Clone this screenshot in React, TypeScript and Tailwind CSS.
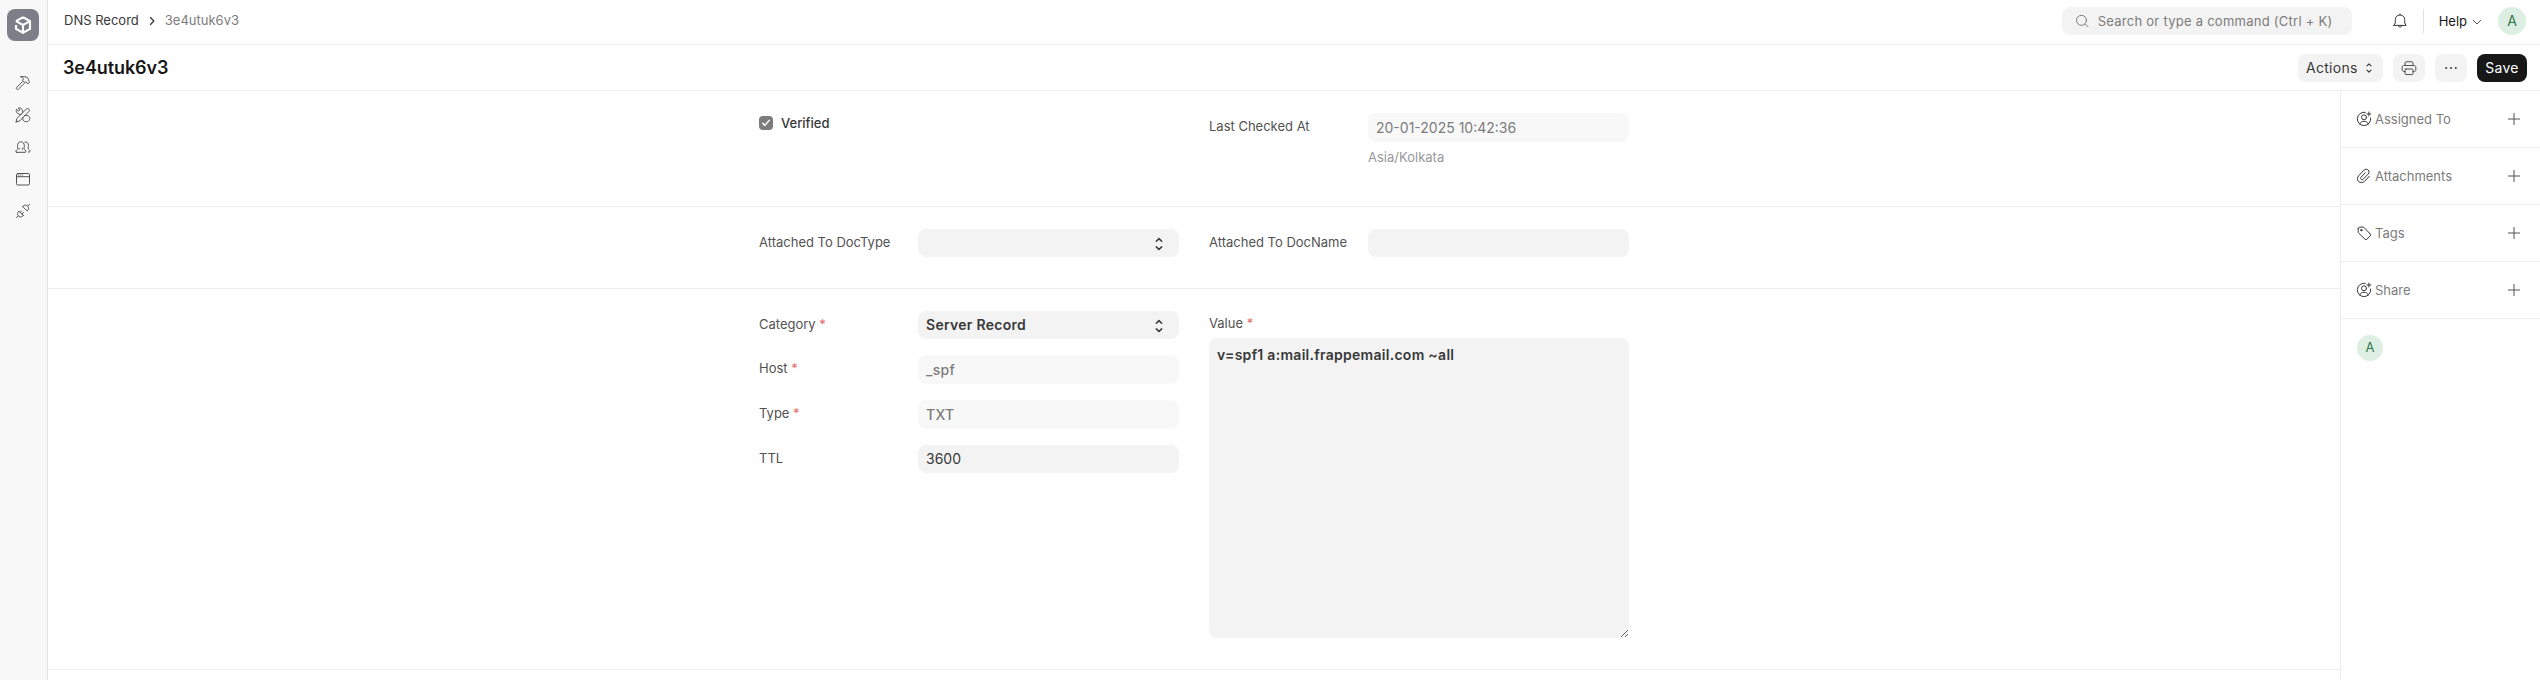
import type { ReactNode } from "react";

function Icon({ size = 16, className = "", children }: { size?: number; className?: string; children: ReactNode }) {
  return (
    <svg
      width={size}
      height={size}
      viewBox="0 0 16 16"
      fill="none"
      stroke="currentColor"
      strokeLinecap="round"
      strokeLinejoin="round"
      className={`shrink-0 ${className}`}
    >
      {children}
    </svg>
  );
}

const SelectIcon = ({ className = "" }: { className?: string }) => (
  <Icon className={className}>
    <path d="M5.300 5.200 8 2.600l2.700 2.600M5.300 10.900 8 13.500l2.700-2.600" strokeWidth="1.500" />
  </Icon>
);

const Plus = () => (
  <Icon className="text-[#525252]">
    <path d="M8 2.500v11M2.500 8h11" strokeLinecap="square" />
  </Icon>
);

const UserPlus = () => (
  <Icon>
    <path d="M9.300 1.300A6.700 6.700 0 1 0 14.700 7" />
    <circle cx="8" cy="6.300" r="2.500" />
    <path d="M3.600 13c.7-1.700 2.300-2.700 4.400-2.700s3.700 1 4.400 2.700M12.900 1v4M10.900 3h4" />
  </Icon>
);

const Clip = () => (
  <Icon>
    <path d="m13.400 8.200-4.900 5.100c-1.700 1.700-4.300 1.700-5.900.2-1.600-1.600-1.500-4.200.1-5.900l5.400-5.500c1.200-1.200 3-1.200 4.100-.1s1.100 2.900 0 4.100L7.200 11.200c-.7.700-1.600.7-2.200.1s-.6-1.500.1-2.200l4.200-4.300" />
  </Icon>
);

const Tag = () => (
  <Icon>
    <path d="M2.200 3.600v3.500c0 .4.200.8.500 1.100l6.400 6.100c.5.500 1.200.5 1.700 0l3.600-3.500c.5-.5.500-1.200 0-1.700L8.200 2.600c-.3-.3-.7-.5-1.100-.5H3.700c-.8 0-1.500.700-1.500 1.500Z" />
    <circle cx="5.300" cy="5.200" r=".7" fill="currentColor" />
  </Icon>
);

const navIcons: ReactNode[] = [
  <Icon key="build">
    <path d="M5.700 1.700h3.400c3 0 4.800 1.700 4.600 4.300l1 .9-1.800 1.900-2-1.800-1.400.3-2-2 .9-1.400c-.3-1-1.200-1.700-2.700-2.200ZM7.600 6.500l-6 6c-1 1.100.7 2.800 1.800 1.700l6-6" />
  </Icon>,
  <Icon key="tools">
    <path d="M1.200 14.800l.6-3.300 9.500-9.400c1.800-1.600 4.100.7 2.500 2.500l-9.300 9.500-3.300.7ZM6.200 7.200c-3.400.7-5.800-1.900-4.700-4.900l2 1.900 1.300-1.300-1.800-1.700c3-.8 5.400 1.500 4.500 4.300M9.600 8.600c3.500-.8 6.100 1 4.900 3.900-1 2.500-4.100 3-5.800 1.300-1.200-1.200-1-2.600-.8-3.600" />
  </Icon>,
  <Icon key="users">
    <path d="M1.500 13.300h8.600c.9 0 1-.8.700-1.400-.4-.8-1.200-1-1.600-1.600-.5-.9.100-1.900.1-3.600 0-2.200-1.300-3.900-3.500-3.900S2.500 4.500 2.500 6.700c0 1.700.5 2.700 0 3.600-.4.600-1.300.800-1.600 1.600-.2.600-.1 1.400.6 1.400ZM4.200 9.200v1M7.400 9.200v1M9.900 3c2.100-.5 3.500 1.300 3.500 3.400 0 1.700-.5 2.800 0 3.700.4.600 1.300.8 1.600 1.500.2.600 0 1.400-.7 1.400h-.9" />
  </Icon>,
  <Icon key="website">
    <rect x="1.500" y="2.500" width="13" height="11.500" rx="1.400" />
    <path d="M1.500 5.700h13M3.200 4h.3M5.200 4h.3M7.200 4h.3" />
  </Icon>,
  <Icon key="plug">
    <path d="M7.600 3.500c1.500-1.500 2.800-1.800 4.200-1 .8.500 1.400 1.300 1.700 2.200.2 1.200-.4 2.300-1.400 3.200L7.600 3.500ZM13 2.900l1.500-1.500M8.300 12.500c-1.400 1.500-2.700 1.800-4.100 1-.8-.5-1.400-1.300-1.600-2.200-.2-1.200.3-2.300 1.300-3.200l4.400 4.400ZM3 13.100l-1.500 1.500M5.300 9.300l1.500-1.500M7 11l1.500-1.500" />
  </Icon>,
];

function Sidebar() {
  return (
    <aside className="flex w-12 shrink-0 flex-col border-r border-[#e2e2e2] bg-[#f8f8f8] pt-[9px] pl-[7px] text-[#525252]">
      <div className="flex size-8 items-center justify-center rounded-lg bg-[#7c7f88] text-white">
        <Icon size={20}>
          <path
            d="m8 1.800 5.600 3.100v6.200L8 14.200l-5.600-3.100V8M2.400 4.900 8 8l5.600-3.100M8 8v6M2.400 4.900 8 1.800"
            strokeWidth="1.700"
            strokeLinecap="butt"
            strokeLinejoin="miter"
          />
        </Icon>
      </div>
      <nav className="mt-[34px] ml-2 flex flex-col gap-4">
        {navIcons.map((icon, i) => (
          <a key={i} className="block">
            {icon}
          </a>
        ))}
      </nav>
    </aside>
  );
}

function Navbar() {
  return (
    <header className="flex h-[45px] shrink-0 items-center justify-between border-b border-[#ededed] pr-[14px] pb-[2px] pl-4">
      <div className="flex items-center text-[13px]">
        <span className="text-[#383838]">DNS Record</span>
        <Icon size={12} className="mx-[7px] text-[#383838]">
          <path d="m6 3.300 4.500 4.700L6 12.700" strokeWidth="1.700" />
        </Icon>
        <span className="text-[#7c7c7c]">3e4utuk6v3</span>
      </div>
      <div className="flex items-center">
        <div className="flex h-7 w-[290px] items-center rounded-lg bg-[#f3f3f3] pl-3 text-[13px] tracking-[0.02em] text-[#7c7c7c]">
          <Icon className="mr-2">
            <circle cx="7.500" cy="7.300" r="5" />
            <path d="m11.200 11 2.800 2.800" />
          </Icon>
          <span className="pt-[2px]">Search or type a command (Ctrl + K)</span>
        </div>
        <Icon className="ml-10 text-[#383838]">
          <path d="M1.900 12.400h12.200L12.700 10V6.500C12.700 3.900 10.700 2 8 2S3.300 3.900 3.300 6.500V10l-1.400 2.400ZM6.200 12.700c.2 2 3.400 2 3.600 0M8 1v1" />
        </Icon>
        <div className="ml-[15px] h-6 w-px bg-[#e2e2e2]" />
        <span className="ml-[15px] pt-[2px] text-[13px] text-[#171717]">Help</span>
        <Icon size={12} className="mt-[2px] ml-1 text-[#525252]">
          <path d="m3 5.700 5 5 5-5" strokeWidth="1.300" />
        </Icon>
        <div className="ml-[15px] flex size-7 items-center justify-center rounded-full bg-[#ddefe3] text-sm text-[#30794c]">A</div>
      </div>
    </header>
  );
}

function TitleBar() {
  return (
    <div className="flex h-[46px] shrink-0 items-center justify-between border-b border-[#ededed] pr-[13px] pl-[15px]">
      <h1 className="text-lg font-semibold tracking-[-0.005em] text-[#171717]">3e4utuk6v3</h1>
      <div className="flex items-center gap-[10px]">
        <button className="flex h-7 w-[85px] items-center rounded-lg bg-[#f3f3f3] pl-2 text-sm tracking-[0.02em] text-[#383838]">
          Actions
          <SelectIcon className="ml-[3px] scale-75" />
        </button>
        <button className="flex h-7 w-8 items-center justify-center rounded-lg bg-[#f3f3f3] text-[#525252]">
          <Icon>
            <path d="M4 5.500V3c0-.8.500-1.300 1.300-1.300h5.400c.8 0 1.300.5 1.300 1.300v2.500M4 11.500H2.700c-.8 0-1.500-.6-1.500-1.500V7c0-.8.700-1.500 1.500-1.500h10.600c.8 0 1.500.7 1.500 1.500v3c0 .9-.7 1.500-1.500 1.500H12M5 9h6c.6 0 1 .4 1 1v3.600c0 .6-.4 1-1 1H5c-.6 0-1-.4-1-1V10c0-.6.400-1 1-1Z" />
          </Icon>
        </button>
        <button className="flex h-7 w-8 items-center justify-center rounded-lg bg-[#f3f3f3] text-[#383838]">
          <Icon>
            <path d="M3.200 8h0M8 8h0M12.800 8h0" strokeWidth="2" />
          </Icon>
        </button>
        <button className="h-7 w-[50px] rounded-lg bg-[#171717] text-sm tracking-[0.02em] text-white">Save</button>
      </div>
    </div>
  );
}

function Label({ children, required = false }: { children: ReactNode; required?: boolean }) {
  return (
    <label className="w-[159px] shrink-0 pt-1 text-[13px] leading-[18px] text-[#525252]">
      {children}
      {required && <span className="text-[#e86b6b]"> *</span>}
    </label>
  );
}

function ReadOnly({ children }: { children: ReactNode }) {
  return <div className="flex h-[29px] w-[261px] items-center rounded-lg bg-[#f8f8f8] px-2 text-[#7c7c7c]">{children}</div>;
}

function Control({ children, select = false }: { children?: ReactNode; select?: boolean }) {
  return (
    <div className="flex h-7 w-[261px] items-center justify-between rounded-lg bg-[#f3f3f3] pr-3 pl-2 text-[#383838]">
      <span>{children}</span>
      {select && <SelectIcon className="mt-[2px] text-[#383838]" />}
    </div>
  );
}

function Form() {
  return (
    <main className="flex min-w-0 flex-1 flex-col text-sm">
      <section className="flex h-[116px] shrink-0 justify-center border-b border-[#ededed] pt-[22px]">
        <div className="flex w-[450px] gap-2 pt-[3px]">
          <span className="flex size-[14px] items-center justify-center rounded-[4px] bg-[#7c7c7c] text-white">
            <Icon size={10}>
              <path d="m2.800 8.500 3.400 3.300 7-8" strokeWidth="2.400" />
            </Icon>
          </span>
          <span className="text-[13px] leading-[14px] font-medium text-[#383838]">Verified</span>
        </div>
        <div className="flex w-[420px]">
          <Label>Last Checked At</Label>
          <div>
            <ReadOnly>20-01-2025 10:42:36</ReadOnly>
            <p className="mt-[6px] text-[13px] leading-[18px] text-[#999999]">Asia/Kolkata</p>
          </div>
        </div>
      </section>
      <section className="flex h-[82px] shrink-0 justify-center border-b border-[#ededed] pt-[22px]">
        <div className="flex w-[450px]">
          <Label>Attached To DocType</Label>
          <Control select />
        </div>
        <div className="flex w-[420px]">
          <Label>Attached To DocName</Label>
          <Control />
        </div>
      </section>
      <section className="flex h-[381px] shrink-0 justify-center border-b border-[#ededed] pt-[22px]">
        <div className="flex w-[450px] flex-col gap-4">
          <div className="flex">
            <Label required>Category</Label>
            <Control select>
              <b className="font-semibold tracking-[0.02em]">Server Record</b>
            </Control>
          </div>
          <div className="flex">
            <Label required>Host</Label>
            <ReadOnly>
              <span className="font-medium tracking-[0.02em]">_spf</span>
            </ReadOnly>
          </div>
          <div className="flex">
            <Label required>Type</Label>
            <ReadOnly>
              <span className="font-medium tracking-[0.02em]">TXT</span>
            </ReadOnly>
          </div>
          <div className="flex">
            <Label>TTL</Label>
            <Control>3600</Control>
          </div>
        </div>
        <div className="flex w-[420px] flex-col">
          <div className="-mt-px flex h-[28px]">
            <Label required>Value</Label>
          </div>
          <textarea
            className="h-[300px] w-[420px] rounded-lg bg-[#f3f3f3] px-2 py-[7px] text-sm font-semibold tracking-[0.02em] text-[#383838] outline-none"
            defaultValue="v=spf1 a:mail.frappemail.com ~all"
          />
        </div>
      </section>
    </main>
  );
}

const panels: { label: string; icon: ReactNode }[] = [
  { label: "Assigned To", icon: <UserPlus /> },
  { label: "Attachments", icon: <Clip /> },
  { label: "Tags", icon: <Tag /> },
  { label: "Share", icon: <UserPlus /> },
];

function SidePanel() {
  return (
    <aside className="w-[200px] shrink-0 border-l border-[#ededed]">
      {panels.map(({ label, icon }) => (
        <div key={label} className="flex h-[57px] items-center border-b border-[#ededed] pr-[18px] pl-[15px] text-[#383838]">
          {icon}
          <span className="ml-[3px] flex-1 pt-[2px] text-[13px] text-[#7c7c7c]">{label}</span>
          <Plus />
        </div>
      ))}
      <div className="mt-4 ml-4 flex size-[26px] items-center justify-center rounded-full bg-[#ddefe3] text-[13px] text-[#30794c]">A</div>
    </aside>
  );
}

export default function App() {
  return (
    <div className="flex h-[680px] w-full overflow-hidden bg-white font-['Inter',sans-serif]">
      <Sidebar />
      <div className="flex min-w-0 flex-1 flex-col">
        <Navbar />
        <TitleBar />
        <div className="flex min-h-0 flex-1">
          <Form />
          <SidePanel />
        </div>
      </div>
    </div>
  );
}
